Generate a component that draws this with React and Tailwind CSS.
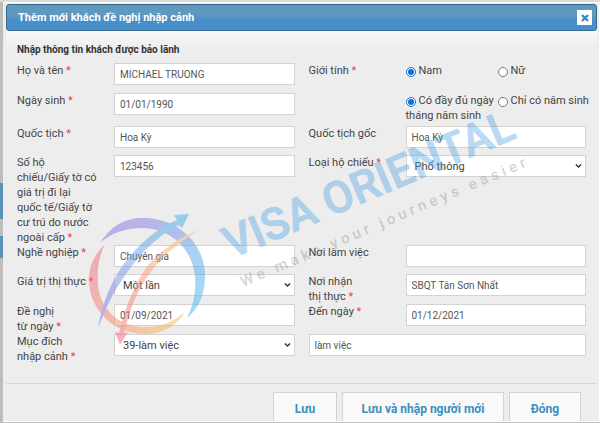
import React, { useState } from "react";

const inputClass =
  "w-full h-[22px] border border-[#d3d3d3] bg-white px-[5px] text-[10px] text-[#555] outline-none rounded-none";
const selectClass =
  "w-full h-[22px] border border-[#d3d3d3] bg-white pl-[8px] pr-[20px] text-[11px] text-[#444] outline-none rounded-none appearance-none";
const buttonClass =
  "h-[34px] border border-[#d3d3d3] bg-[#f9f9f9] text-[12px] font-bold text-[#3a8fbd] hover:bg-white";

const Label = ({ htmlFor, required, children }) => (
  <label htmlFor={htmlFor} className="block">
    {children}
    {required && <span className="text-[#f04040]"> *</span>}
  </label>
);

const TextField = ({ id, label, value, required }) => (
  <div className="grid grid-cols-[97px_1fr]">
    <Label htmlFor={id} required={required}>{label}</Label>
    <input id={id} type="text" defaultValue={value} className={inputClass} />
  </div>
);

const Select = ({ id, value }) => (
  <div className="relative h-[22px]">
    <select id={id} defaultValue={value} className={selectClass}>
      <option>{value}</option>
    </select>
    <svg viewBox="0 0 8 6" className="absolute right-[4px] top-[8px] w-[7px] h-[6px] pointer-events-none">
      <path d="M1 1.2 L4 4.2 L7 1.2" fill="none" stroke="#333" strokeWidth="1.6" />
    </svg>
  </div>
);

const SelectField = ({ id, label, value, required }) => (
  <div className="grid grid-cols-[97px_1fr]">
    <Label htmlFor={id} required={required}>{label}</Label>
    <Select id={id} value={value} />
  </div>
);

const Radio = ({ name, value, checked, onChange, children }) => (
  <label className="block">
    <input
      type="radio"
      name={name}
      value={value}
      checked={checked}
      onChange={() => onChange(value)}
      className="m-0 mr-[3px] w-[10px] h-[10px] align-[-3px] accent-[#0a6fd8]"
    />
    {children}
  </label>
);

const Row = ({ className, children }) => (
  <div className={`grid grid-cols-2 gap-[14px] ${className}`}>{children}</div>
);

// Company logo and tagline laid across the form
const Watermark = () => (
  <svg
    viewBox="0 2 600 421"
    className="absolute left-0 top-0 w-[600px] h-[421px] pointer-events-none"
    aria-hidden="true"
  >
    <defs>
      <linearGradient id="arcTop" x1="100" y1="240" x2="200" y2="290" gradientUnits="userSpaceOnUse">
        <stop offset="0" stopColor="#8a6fe0" />
        <stop offset="0.45" stopColor="#7f86e6" />
        <stop offset="1" stopColor="#46b4ee" />
      </linearGradient>
      <linearGradient id="arcBottom" x1="95" y1="270" x2="185" y2="320" gradientUnits="userSpaceOnUse">
        <stop offset="0" stopColor="#f2707e" />
        <stop offset="0.45" stopColor="#f59068" />
        <stop offset="1" stopColor="#f8bd55" />
      </linearGradient>
      <linearGradient id="arrowUp" x1="98" y1="325" x2="180" y2="220" gradientUnits="userSpaceOnUse">
        <stop offset="0" stopColor="#7a6be4" />
        <stop offset="0.5" stopColor="#7a9bea" />
        <stop offset="1" stopColor="#3fb0e6" />
      </linearGradient>
      <linearGradient id="arrowDown" x1="198" y1="230" x2="120" y2="340" gradientUnits="userSpaceOnUse">
        <stop offset="0" stopColor="#fac45a" />
        <stop offset="0.5" stopColor="#f79a72" />
        <stop offset="1" stopColor="#f2667e" />
      </linearGradient>
    </defs>
    <g opacity="0.5">
      <path d="M100 243 C112 224 128 217 145 218 C180 219 205 245 205 276 C205 296 198 309 187 318 C194 304 196 292 195 276 C192 250 173 229 143 228 C126 228 111 233 100 243 Z" fill="url(#arcTop)" />
      <path d="M105 244 C94 255 89 266 89 280 C89 309 113 334 145 334 C164 334 177 325 185 312 C173 322 161 327 146 327 C118 327 99 308 98 283 C97 268 99 256 105 244 Z" fill="url(#arcBottom)" />
      <path d="M98 328 C103 300 112 281 123 265 C137 246 154 230 177 220 L174 215 L189 214 L182 228 L179 225 C157 236 140 254 126 274 C114 291 107 305 98 328 Z" fill="url(#arrowUp)" />
      <path d="M199 230 C177 238 159 252 146 268 C134 285 126 306 119 333 L115 332 L120 345 L128 332 L124 333 C130 308 138 289 150 273 C162 256 179 242 199 230 Z" fill="url(#arrowDown)" />
    </g>
    <text
      transform="translate(231 259) rotate(-23)"
      fill="#4a9fe3"
      stroke="#4a9fe3"
      strokeWidth="1"
      strokeLinejoin="round"
      opacity="0.38"
      className="font-[Roboto,sans-serif] text-[44px] font-medium"
    >
      VISA ORIENTAL
    </text>
    <text
      transform="translate(243 287) rotate(-23)"
      fill="#8c8c8c"
      opacity="0.36"
      className="font-[Roboto,sans-serif] text-[15px] font-medium tracking-[4px]"
    >
      We make your journeys easier
    </text>
  </svg>
);

const App = () => {
  const [gender, setGender] = useState("nam");
  const [birthType, setBirthType] = useState("full");

  return (
    <div className="relative min-h-screen overflow-hidden border-t-2 border-[#dcdcd8] bg-[#bdbdbd] pl-[3px] font-[Roboto,sans-serif] text-[11px] leading-[15px] text-[#444]">
      <div className="absolute left-0 top-[181px] h-[36px] w-[3px] bg-[#5b93b8]" />
      <div className="absolute left-0 top-[234px] h-[22px] w-[3px] bg-[#5b93b8]" />

      <div className="relative overflow-hidden border-y border-r border-white bg-[#ededed] pl-[3px] pr-[2px] pt-px">
        <div className="flex h-[27px] items-center justify-between rounded-[3px] border border-[#35688f] bg-linear-to-b from-[#6198bd] from-40% to-[#478ecb] to-60% pl-[11px] pr-[4px]">
          <h1 className="text-[11px] font-bold text-white">Thêm mới khách đề nghị nhập cảnh</h1>
          <button type="button" aria-label="Đóng cửa sổ" className="flex h-[15px] w-[15px] items-center justify-center bg-white">
            <svg viewBox="0 0 8 8" className="w-[8px] h-[8px]">
              <path d="M1 1 L7 7 M7 1 L1 7" stroke="#3c8cc0" strokeWidth="2.4" />
            </svg>
          </button>
        </div>

        <form>
          <div className="bg-linear-to-b from-[#f6f9fa] to-[#ededed] to-5% pl-[11px] pr-[11px] pt-[11px]">
            <h2 className="mb-[6px] text-[10px] font-bold text-[#333]">Nhập thông tin khách được bảo lãnh</h2>

            <Row className="h-[30px]">
              <TextField id="fullName" label="Họ và tên" value="MICHAEL TRUONG" required />
              <div className="grid grid-cols-[97px_1fr]" role="radiogroup" aria-label="Giới tính">
                <span>Giới tính<span className="text-[#f04040]"> *</span></span>
                <div className="grid grid-cols-[92px_1fr]">
                  <Radio name="gender" value="nam" checked={gender === "nam"} onChange={setGender}>Nam</Radio>
                  <Radio name="gender" value="nu" checked={gender === "nu"} onChange={setGender}>Nữ</Radio>
                </div>
              </div>
            </Row>
            <Row className="h-[33px]">
              <TextField id="birthday" label="Ngày sinh" value="01/01/1990" required />
              <div className="grid grid-cols-[92px_1fr] whitespace-nowrap pl-[97px]">
                <Radio name="birthType" value="full" checked={birthType === "full"} onChange={setBirthType}>Có đầy đủ ngày<br />tháng năm sinh</Radio>
                <Radio name="birthType" value="year" checked={birthType === "year"} onChange={setBirthType}>Chỉ có năm sinh</Radio>
              </div>
            </Row>
            <Row className="h-[29px]">
              <TextField id="nationality" label="Quốc tịch" value="Hoa Kỳ" required />
              <TextField id="origin" label="Quốc tịch gốc" value="Hoa Kỳ" />
            </Row>
            <Row className="h-[90px]">
              <TextField
                id="passport"
                label={<>Số hộ<br />chiếu/Giấy tờ có<br />giá trị đi lại<br />quốc tế/Giấy tờ<br />cư trú do nước<br />ngoài cấp</>}
                value="123456"
                required
              />
              <SelectField id="passportType" label="Loại hộ chiếu" value="Phổ thông" required />
            </Row>
            <Row className="h-[29px]">
              <TextField id="job" label="Nghề nghiệp" value="Chuyên gia" required />
              <TextField id="workplace" label="Nơi làm việc" value="" />
            </Row>
            <Row className="h-[30px]">
              <SelectField id="visaType" label="Giá trị thị thực" value="Một lần" required />
              <TextField id="pickup" label={<>Nơi nhận<br />thị thực</>} value="SBQT Tân Sơn Nhất" required />
            </Row>
            <Row className="h-[30px]">
              <TextField id="fromDate" label={<>Đề nghị<br />từ ngày</>} value="01/09/2021" required />
              <TextField id="toDate" label="Đến ngày" value="01/12/2021" required />
            </Row>
            <Row className="h-[49px]">
              <SelectField id="purpose" label={<>Mục đích<br />nhập cảnh</>} value="39-làm việc" required />
              <input type="text" aria-label="Chi tiết mục đích" defaultValue="làm việc" className={inputClass} />
            </Row>
          </div>

          <div className="flex h-[38px] justify-end gap-[5px] overflow-hidden border-t border-[#d6d6d6] pr-[16px] pt-[8px]">
            <button type="button" className={`${buttonClass} w-[64px]`}>Lưu</button>
            <button type="button" className={`${buttonClass} w-[162px]`}>Lưu và nhập người mới</button>
            <button type="button" className={`${buttonClass} w-[72px]`}>Đóng</button>
          </div>
        </form>
      </div>

      <Watermark />
    </div>
  );
};

export default App;
